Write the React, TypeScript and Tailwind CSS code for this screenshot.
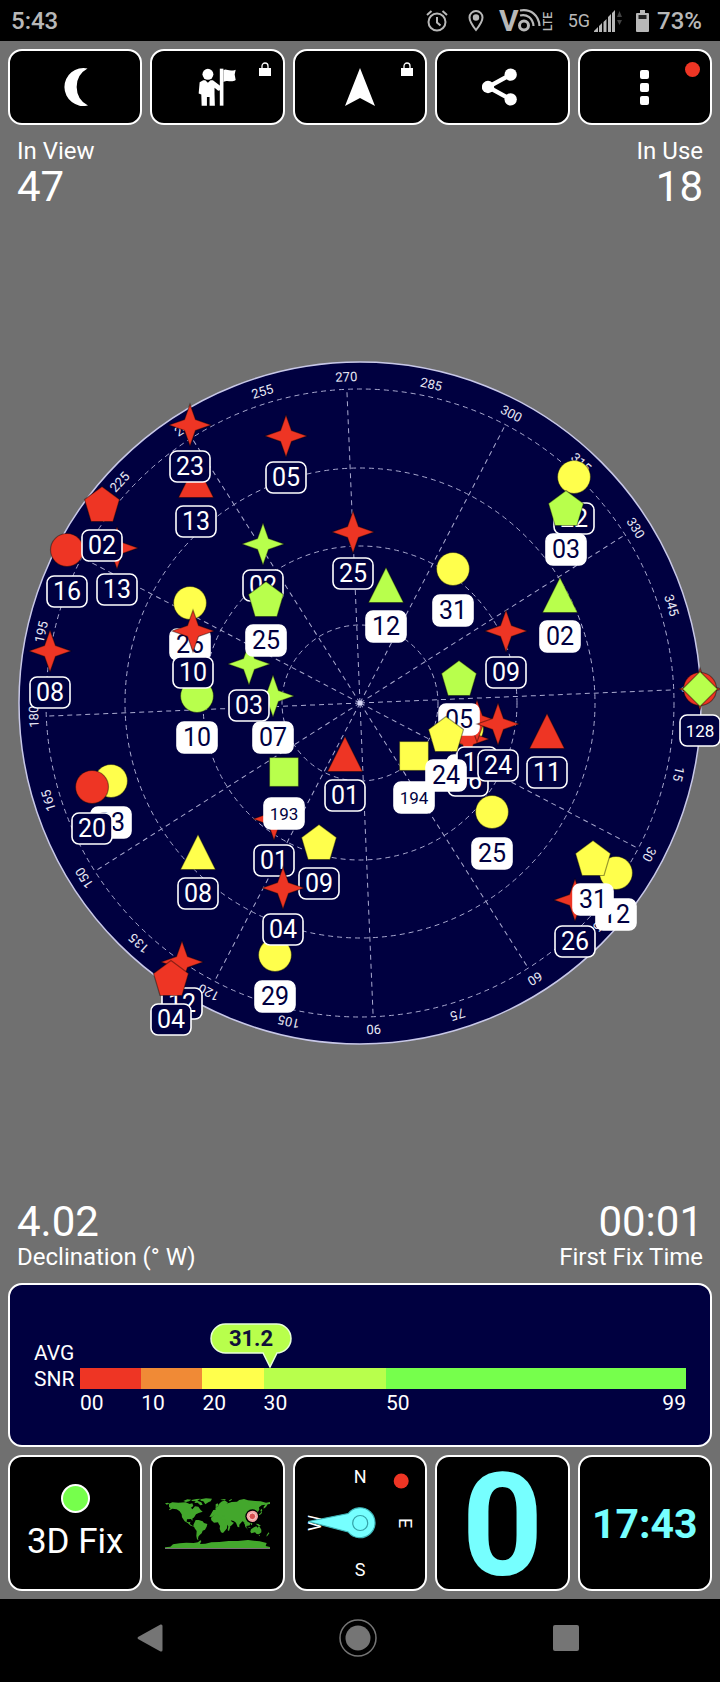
import type { ReactNode } from 'react';

type Shape = 'star' | 'circle' | 'triangle' | 'pentagon' | 'square' | 'diamond';

interface Satellite {
  id: string;
  shape: Shape;
  color: string;
  x: number;
  y: number;
  used?: boolean;
}

const RED = '#ee3524';
const ORANGE = '#f08a36';
const YELLOW = '#ffff4c';
const LIME = '#b8ff4c';
const GREEN = '#76ff4c';
const CYAN = '#76ffff';
const NAVY = '#000040';

// sky plot geometry, centre of a 720x704 canvas
const CX = 360;
const CY = 352;
const OUTER = 341;
const RINGS = [78, 157, 235, 314];
const HEADING = 272.4;

// painted in this order, later ones cover earlier ones
const satellites: Satellite[] = [
  { id: '13', shape: 'triangle', color: RED, x: 196, y: 129 },
  { id: '23', shape: 'star', color: RED, x: 190, y: 74 },
  { id: '05', shape: 'star', color: RED, x: 286, y: 85 },
  { id: '13', shape: 'star', color: RED, x: 117, y: 197 },
  { id: '16', shape: 'circle', color: RED, x: 67, y: 199 },
  { id: '02', shape: 'pentagon', color: RED, x: 102, y: 153 },
  { id: '25', shape: 'star', color: RED, x: 353, y: 181 },
  { id: '08', shape: 'star', color: RED, x: 50, y: 300 },
  { id: '02', shape: 'star', color: LIME, x: 263, y: 193 },
  { id: '07', shape: 'star', color: LIME, x: 273, y: 345, used: true },
  { id: '03', shape: 'star', color: LIME, x: 249, y: 313 },
  { id: '25', shape: 'pentagon', color: LIME, x: 266, y: 248, used: true },
  { id: '26', shape: 'circle', color: YELLOW, x: 190, y: 252, used: true },
  { id: '10', shape: 'circle', color: LIME, x: 197, y: 345, used: true },
  { id: '10', shape: 'star', color: RED, x: 193, y: 280 },
  { id: '12', shape: 'triangle', color: LIME, x: 386, y: 234, used: true },
  { id: '31', shape: 'circle', color: YELLOW, x: 453, y: 218, used: true },
  { id: '22', shape: 'circle', color: YELLOW, x: 574, y: 126 },
  { id: '03', shape: 'pentagon', color: LIME, x: 566, y: 157, used: true },
  { id: '02', shape: 'triangle', color: LIME, x: 560, y: 244, used: true },
  { id: '09', shape: 'star', color: RED, x: 506, y: 280 },
  { id: '18', shape: 'circle', color: YELLOW, x: 467, y: 378, used: true },
  { id: '06', shape: 'star', color: RED, x: 468, y: 388 },
  { id: '15', shape: 'star', color: RED, x: 477, y: 370 },
  { id: '05', shape: 'pentagon', color: LIME, x: 459, y: 327, used: true },
  { id: '24', shape: 'star', color: RED, x: 498, y: 373 },
  { id: '194', shape: 'square', color: YELLOW, x: 414, y: 405, used: true },
  { id: '24', shape: 'pentagon', color: YELLOW, x: 446, y: 383, used: true },
  { id: '11', shape: 'triangle', color: RED, x: 547, y: 380 },
  { id: '25', shape: 'circle', color: YELLOW, x: 492, y: 461, used: true },
  { id: '', shape: 'star', color: RED, x: 700, y: 338 },
  { id: '', shape: 'circle', color: RED, x: 700, y: 338 },
  { id: '128', shape: 'diamond', color: LIME, x: 700, y: 338 },
  { id: '26', shape: 'star', color: RED, x: 575, y: 549 },
  { id: '12', shape: 'circle', color: YELLOW, x: 616, y: 522, used: true },
  { id: '31', shape: 'pentagon', color: YELLOW, x: 593, y: 507, used: true },
  { id: '23', shape: 'circle', color: YELLOW, x: 111, y: 430, used: true },
  { id: '20', shape: 'circle', color: RED, x: 92, y: 436 },
  { id: '08', shape: 'triangle', color: YELLOW, x: 198, y: 501 },
  { id: '01', shape: 'triangle', color: RED, x: 345, y: 403 },
  { id: '01', shape: 'star', color: RED, x: 274, y: 468 },
  { id: '193', shape: 'square', color: LIME, x: 284, y: 421, used: true },
  { id: '09', shape: 'pentagon', color: YELLOW, x: 319, y: 491 },
  { id: '29', shape: 'circle', color: YELLOW, x: 275, y: 604, used: true },
  { id: '04', shape: 'star', color: RED, x: 283, y: 537 },
  { id: '12', shape: 'star', color: RED, x: 182, y: 611 },
  { id: '04', shape: 'pentagon', color: RED, x: 171, y: 627 },
];

const snrBands = [
  { from: 0, to: 10, color: RED },
  { from: 10, to: 20, color: ORANGE },
  { from: 20, to: 30, color: YELLOW },
  { from: 30, to: 50, color: LIME },
  { from: 50, to: 99, color: GREEN },
];
const SNR_MAX = 99;
const snrAverage = 31.2;

function Marker({ shape, color }: { shape: Shape; color: string }) {
  const paint = { fill: color, stroke: '#000', strokeOpacity: 0.4, strokeWidth: 1.2 };
  if (shape === 'star') return <path d="M0-21 5.5-5.5 21 0 5.5 5.5 0 21-5.5 5.5-21 0-5.5-5.5Z" {...paint} />;
  if (shape === 'circle') return <circle r="16.5" {...paint} />;
  if (shape === 'triangle') return <path d="M0-17.5 17.5 17.5H-17.5Z" {...paint} />;
  if (shape === 'pentagon') return <path d="M0-17.5 17.5-4.5 11 17.5H-11L-17.5-4.5Z" {...paint} />;
  if (shape === 'square') return <rect x="-14.5" y="-14.5" width="29" height="29" {...paint} />;
  return <path d="M0-17.5 17.5 0 0 17.5-17.5 0Z" {...paint} />;
}

function SatelliteLabel({ id, used }: { id: string; used?: boolean }) {
  const long = id.length > 2;
  return (
    <>
      <rect
        x="-20"
        y="26"
        width="40"
        height="31"
        rx="7"
        fill={used ? '#fff' : NAVY}
        stroke="#fff"
        strokeWidth="1.6"
      />
      <text y={long ? 48 : 50} fontSize={long ? 17 : 25} textAnchor="middle" fill={used ? NAVY : '#fff'}>
        {id}
      </text>
    </>
  );
}

function SkyPlot() {
  const azimuths = Array.from({ length: 24 }, (_, i) => i * 15);
  return (
    <svg viewBox="0 0 720 704" className="w-full" role="img" aria-label="Satellite sky plot">
      <circle cx={CX} cy={CY} r={OUTER} fill={NAVY} stroke="#c8c8e8" strokeWidth="1.5" />
      <g fill="none" stroke="#a9a9cf" strokeWidth="1" strokeDasharray="5 4">
        {RINGS.map((r) => (
          <circle key={r} cx={CX} cy={CY} r={r} />
        ))}
        {azimuths.filter((a) => a % 30 === 0).map((a) => (
          <line key={a} x1={CX} y1={CY} x2={CX} y2={CY - 314} transform={`rotate(${a - HEADING} ${CX} ${CY})`} />
        ))}
      </g>
      <circle cx={CX} cy={CY} r="2.5" fill="#d4d4f4" />
      <g fill="#e8e8f4" fontSize="13" textAnchor="middle">
        {azimuths.map((a) => (
          <text key={a} x={CX} y={CY - 322} transform={`rotate(${a - HEADING} ${CX} ${CY})`}>
            {a}
          </text>
        ))}
      </g>
      {satellites.map((s, i) => (
        <g key={i} transform={`translate(${s.x} ${s.y})`}>
          <Marker shape={s.shape} color={s.color} />
          {s.id && <SatelliteLabel id={s.id} used={s.used} />}
        </g>
      ))}
    </svg>
  );
}

function StatusBar() {
  return (
    <header className="flex h-[41px] items-center justify-between bg-black pr-[18px] pl-[11px] text-[24px] font-medium text-[#b8b8b8]">
      <span>5:43</span>
      <div className="flex items-center">
        <svg width="22" height="22" viewBox="0 0 22 22" fill="none" stroke="currentColor" strokeWidth="2" className="mr-[20px]">
          <circle cx="11" cy="12" r="8.5" />
          <path d="M11 7v5.5l3.5 3M1 5l4.5-4M21 5l-4.5-4" />
        </svg>
        <svg width="16" height="22" viewBox="0 0 16 22" fill="none" stroke="currentColor" strokeWidth="2" className="mr-[15px]">
          <path d="M8 20C4 15 1.500 11 1.500 7.500a6.500 6.500 0 0 1 13 0C14.500 11 12 15 8 20Z" />
          <circle cx="8" cy="7.500" r="2.200" fill="currentColor" />
        </svg>
        <svg width="55" height="36" viewBox="0 -6 55 36" className="mr-[14px] overflow-visible" fill="none" stroke="currentColor">
          <text x="0" y="22" fontSize="30" fontWeight="700" fill="currentColor" stroke="none">V</text>
          <circle cx="25" cy="16.500" r="4.500" strokeWidth="3" />
          <path d="M21 6.500c7-2 13 3 13.500 10.500M21 1.500c11-2 19 5 19.500 15.500" strokeWidth="2.200" />
          <text transform="translate(53 22) rotate(-90)" fontSize="12" fill="currentColor" stroke="none">LTE</text>
        </svg>
        <span className="mr-1 text-[18px] font-normal">5G</span>
        <svg width="29" height="22" viewBox="0 0 29 22" fill="currentColor" className="mr-[13px]">
          <path d="M0 22v-1l4-4v5ZM5 22v-6l3-3v9ZM9.500 22V12l3-3v13ZM14 22V7l3-3v18ZM18 22V3l3-3v22Z" />
          <path d="M23 7l2.500-6L28 7ZM23 10l2.500 5 2.500-5Z" fill="#444" />
        </svg>
        <svg width="13" height="22" viewBox="0 0 13 22" className="mr-[8px]">
          <path d="M4 0h5v3h3a1 1 0 0 1 1 1v17a1 1 0 0 1-1 1H1a1 1 0 0 1-1-1V4a1 1 0 0 1 1-1h3Z" fill="currentColor" />
          <path d="M2.500 5h8v4h-8Z" fill="#222" />
        </svg>
        <span>73%</span>
      </div>
    </header>
  );
}

function ToolButton({ label, badge, children }: { label: string; badge?: ReactNode; children: ReactNode }) {
  return (
    <button
      type="button"
      aria-label={label}
      className="relative flex h-[76px] flex-1 items-center justify-center rounded-[14px] border-2 border-white bg-black"
    >
      {children}
      {badge}
    </button>
  );
}

function Lock() {
  return (
    <svg width="12" height="14" viewBox="0 0 12 14" className="absolute top-[11px] right-3">
      <rect y="6" width="12" height="8" fill="#fff" />
      <path d="M3 7V4a3 3 0 0 1 6 0v3" fill="none" stroke="#fff" strokeWidth="1.300" />
    </svg>
  );
}

function Toolbar() {
  return (
    <nav className="flex gap-2 px-2 pt-2">
      <ToolButton label="Night mode">
        <svg width="25" height="38" viewBox="0 0 25 38" fill="#fff">
          <path d="M24.500.5A19 19 0 1 0 25 37.500A21 21 0 0 1 24.500.5Z" />
        </svg>
      </ToolButton>
      <ToolButton label="Waypoints" badge={<Lock />}>
        <svg width="39" height="39" viewBox="594 202 118 118" fill="#fff">
          <circle cx="624" cy="221" r="16.500" />
          <path d="M610 239h6l8 8 8-8h7l22 17v13l-6 2-11-9v18l1 36h-16v-26h-8v26h-16l-1-34-8-3 3-34Z" />
          <path d="M660 204h11v112h-11Z" />
          <path d="M671 209c9-7 15 6 37-2l-3 15 3 16c-15 10-22-2-37 6Z" />
        </svg>
      </ToolButton>
      <ToolButton label="Navigate" badge={<Lock />}>
        <svg width="30" height="38" viewBox="0 0 30 38" fill="#fff">
          <path d="M15 0 30 38 15 30 0 38Z" />
        </svg>
      </ToolButton>
      <ToolButton label="Share">
        <svg width="41" height="38" viewBox="366 204 123 114" fill="#fff">
          <path d="M452 224 384 261 452 298" fill="none" stroke="#fff" strokeWidth="13" />
          <circle cx="384" cy="261" r="18.500" />
          <circle cx="452" cy="224" r="18.500" />
          <circle cx="452" cy="298" r="18.500" />
        </svg>
      </ToolButton>
      <ToolButton
        label="More"
        badge={<span className="absolute top-[11px] right-[10px] size-[15px] rounded-full bg-[#ee3524]" />}
      >
        <span className="flex flex-col gap-1">
          <span className="size-[9px] rounded-[2px] bg-white" />
          <span className="size-[9px] rounded-[2px] bg-white" />
          <span className="size-[9px] rounded-[2px] bg-white" />
        </span>
      </ToolButton>
    </nav>
  );
}

function SnrPanel() {
  return (
    <section className="mx-2 mt-3 flex h-[164px] gap-[6px] rounded-[14px] border-2 border-white bg-[#000040] px-6 text-[21px]">
      <div className="w-10 pt-[55px] leading-[26px]">
        AVG
        <br />
        SNR
      </div>
      <div className="relative flex-1 pt-[83px]">
        <div className="absolute top-[38px]" style={{ left: `${(snrAverage / SNR_MAX) * 100}%` }}>
          <svg width="82" height="45" viewBox="0 0 82 45" className="-ml-[61px] max-w-none">
            <path
              d="M15.500 1h51a14.500 14.500 0 0 1 0 29H67L60 44 53 30H15.500a14.500 14.500 0 0 1 0-29Z"
              fill={LIME}
              stroke="#e8ffd8"
              strokeWidth="1.500"
            />
            <text x="41" y="23" textAnchor="middle" fontSize="22" fontWeight="700" fill="#10103a">
              {snrAverage}
            </text>
          </svg>
        </div>
        <div className="flex">
          {snrBands.map((b) => (
            <div key={b.from} style={{ width: `${((b.to - b.from) / SNR_MAX) * 100}%` }}>
              <div className="h-[21px]" style={{ backgroundColor: b.color }} />
              <div className="mt-0.5 flex justify-between leading-6">
                <span>{String(b.from).padStart(2, '0')}</span>
                {b.to === SNR_MAX && <span>{b.to}</span>}
              </div>
            </div>
          ))}
        </div>
      </div>
    </section>
  );
}

function Tile({ children }: { children: ReactNode }) {
  return (
    <div className="flex h-[136px] min-w-0 flex-1 flex-col items-center justify-center rounded-[14px] border-2 border-white bg-black">
      {children}
    </div>
  );
}

function WorldMap() {
  return (
    <svg width="105" height="51" viewBox="45 25 315 153" role="img" aria-label="World map">
      <g fill="#43a72c">
        <path d="M45 41l9-2 4 3-8 3ZM57 42l10-4 18 1 22-1 12 5 8-2 3 8-7 5 4 5 8-9 10 1 7 10 6 5-12 4-8 4-5 8-5 3-1 9-4-6-12 1-1 7 7 2 4-2-1 7 7 5 7 1-1 2-11-3-9-8-9-5-8-12-1-9-6-9-9-6-13-2-8 5-2-3 5-3-5-4Z" />
        <path d="M100 34l12-5 12 1-7 5-9 2ZM125 31l14-3 13-1-10 6 12 5 4 7-7 2-8-8-10 1 4-5-12-1ZM151 29l17-3 18 1-4 8-7 3-9 6-6-9-8-2Z" />
        <path d="M119 79l9 2 5 3-5 1Z" />
        <path d="M137 91l9 0 12 4 4 5 10 3-2 8-5 9-7 3-3 8-6 5-4 5-1 7 2 4-5-3-2-10 1-15-6-8-4-10Z" />
        <path d="M190 77l6-8 12-1 6 4 12 1 5 9 5 8 6 0-4 9-6 8-1 9-6 7-6 7-6-2-4-11 1-8-4-7-2-4-12 1-8-7-1-7ZM238 108l3 3-4 13-4-2 1-8Z" />
        <path d="M190 61l7-1-1-6 9-5 1-5 8-8 10-4 10 7-5 3 16-5 16-1 7-5 14-3 12 4 22 2 16 1 16 4 12-2 1 6-8 1-5 8-7 5 0-6 5-6-11 2-8 6 1 7-6 9-6 5-4-4-4 4 4 8-5 9-8 5-5-1 4 9-4 6-5-5 1 9 5 7-9-9-3-14-6-3-9 10 0 8-5-1-5-13-7-5-9-2 4 5 6 2-7 8-9 6-9-18-2-7-9 1-5-4 5-5 10 0-6-4-5 5-7 1-5-5-5-4-5 2-7 6-8 1Z" />
        <path d="M197 44l6-3 3 8-9 4ZM211 30l12-2 6 2-12 2ZM236 33l8-5 2 2-7 5ZM331 62l4-5 2 5-4 5ZM325 75l7-5 2-6 2 6-7 7Z" />
        <path d="M280 96l7 5 5 8-4 0ZM292 99l8-6 3 6-5 9-6-3ZM303 98l4 0-1 9-3-2ZM317 102l8 1 8 6-8 0ZM290 111l13 2-4 1Z" />
        <path d="M303 119l9-6 7-3 4 4 4-6 7 12 0 8-7 6-7-1-5-5-11 3-3-5ZM326 136l4 0-2 4ZM350 136l6-8 2 3-8 10Z" />
        <path d="M45 175V173l16-2 8-7 20-3 20-2 22 1 13-2 7-6 3 2-4 9 16-1 18-4 24-1 28-3 28 0 30-3 35 4 21 5-3 9 13 3V175Z" />
      </g>
      <path d="M45 176.500h315" stroke="#b9a9b5" strokeWidth="2" />
      <circle cx="307" cy="80" r="21" fill="#000" />
      <circle cx="307" cy="80" r="17" fill="#f4a3a3" />
      <circle cx="307" cy="80" r="10" fill="#d85050" stroke="#ffe0e0" strokeWidth="2.500" />
    </svg>
  );
}

function Compass() {
  return (
    <svg viewBox="-65 -66 130 132" className="size-full" role="img" aria-label="Compass">
      <g fill="#fff" fontSize="18" textAnchor="middle">
        <text y="-40">N</text>
        <text y="53">S</text>
        <text transform="translate(39 0) rotate(90)">E</text>
        <text transform="translate(-39 0) rotate(-90)">W</text>
      </g>
      <path d="M-52-1.500-12-9.500A15 15 0 1 1-12 9Z" fill={CYAN} stroke="#3fb5b8" strokeWidth="1.200" />
      <circle r="7.500" fill={CYAN} stroke="#35a3a8" strokeWidth="1.200" />
      <circle cx="41" cy="-42" r="7.500" fill={RED} />
    </svg>
  );
}

export default function App() {
  return (
    <div className="flex min-h-screen flex-col bg-[#707070] font-['Roboto',sans-serif] text-white">
      <StatusBar />
      <Toolbar />

      <div className="mt-3 flex justify-between px-[17px]">
        <div>
          <p className="text-[24px] leading-7">In View</p>
          <p className="text-[42px] leading-[44px]">47</p>
        </div>
        <div className="text-right">
          <p className="text-[24px] leading-7">In Use</p>
          <p className="text-[42px] leading-[44px]">18</p>
        </div>
      </div>

      <main className="flex flex-1 items-center pb-1">
        <SkyPlot />
      </main>

      <div className="flex justify-between px-[17px]">
        <div>
          <p className="text-[42px] leading-[42px]">4.02</p>
          <p className="text-[24px] leading-7">Declination (° W)</p>
        </div>
        <div className="text-right">
          <p className="text-[42px] leading-[42px]">00:01</p>
          <p className="text-[24px] leading-7">First Fix Time</p>
        </div>
      </div>

      <SnrPanel />

      <section className="flex gap-2 p-2">
        <Tile>
          <span className="size-[29px] rounded-full border-2 border-white bg-[#76ff4c]" />
          <span className="mt-2 text-[35px] leading-[42px] whitespace-nowrap">3D Fix</span>
        </Tile>
        <Tile>
          <WorldMap />
        </Tile>
        <Tile>
          <Compass />
        </Tile>
        <Tile>
          <span className="pt-2 text-[142px] leading-none font-bold text-[#76ffff]">0</span>
        </Tile>
        <Tile>
          <span className="pt-0.5 text-[41px] leading-none font-bold text-[#76ffff]">17:43</span>
        </Tile>
      </section>

      <footer className="grid h-[83px] grid-cols-3 place-items-center bg-black pr-[50px] pb-1.5 pl-[46px]">
        <button type="button" aria-label="Back">
          <svg width="26" height="28" viewBox="0 0 26 28" fill="#757575" className="block">
            <path d="M1 13 23.500.5Q25.500 0 25.500 2V26Q25.500 28 23.500 27.500L1 15Q0 14 1 13Z" />
          </svg>
        </button>
        <button type="button" aria-label="Home">
          <svg width="38" height="38" viewBox="0 0 38 38" className="block">
            <circle cx="19" cy="19" r="18" fill="none" stroke="#757575" strokeWidth="1.500" />
            <circle cx="19" cy="19" r="12.500" fill="#757575" />
          </svg>
        </button>
        <button type="button" aria-label="Recent apps">
          <span className="block size-[26px] rounded-[2px] bg-[#757575]" />
        </button>
      </footer>
    </div>
  );
}
